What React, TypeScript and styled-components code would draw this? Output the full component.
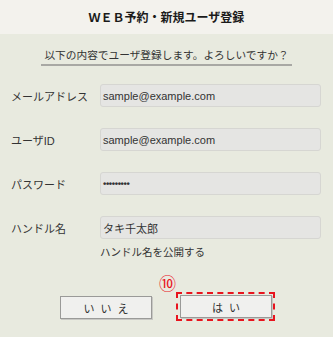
import React from "react";
import styled, { createGlobalStyle } from "styled-components";

const GlobalStyle = createGlobalStyle`
  html, body {
    margin: 0;
    padding: 0;
    background: #e8eadf;
  }
  body {
    font-family: "Liberation Sans", "Noto Sans CJK JP", sans-serif;
  }
`;

const Page = styled.div`
  width: 333px;
  height: 337px;
  background: #e8eadf;
  overflow: hidden;
`;

const Header = styled.div`
  height: 34px;
  background: #f3f2ed;
  display: flex;
  align-items: center;
  justify-content: center;
`;

const Title = styled.h1`
  margin: 0 0 2px;
  font-size: 12px;
  font-weight: bold;
  color: #1a1a1a;
`;

const Lead = styled.div`
  display: flex;
  justify-content: center;
  margin-top: 13px;
`;

const LeadText = styled.p`
  margin: 0;
  padding: 0 3px 2px;
  font-size: 10.7px;
  color: #333;
  border-bottom: 2px solid #a8a8a4;
`;

const Form = styled.div`
  display: grid;
  grid-template-columns: 89px 221px;
  row-gap: 21px;
  padding-left: 11px;
  margin-top: 18px;
  align-items: center;
`;

const Label = styled.label`
  font-size: 11px;
  color: #333;
`;

const Field = styled.div`
  height: 23px;
  box-sizing: border-box;
  background: #e5e5e3;
  border: 1px solid #d6d6d2;
  border-radius: 3px;
  display: flex;
  align-items: center;
  padding-left: 2px;
  font-size: 11px;
  color: #333;
`;

const Dots = styled.span`
  font-size: 9.5px;
  letter-spacing: -0.4px;
  font-weight: bold;
`;

const Note = styled.div`
  grid-column: 2;
  margin-top: -17px;
  font-size: 10.5px;
  color: #333;
`;

const Buttons = styled.div`
  display: flex;
  justify-content: center;
  align-items: center;
  gap: 24px;
  margin-top: 34px;
  padding-left: 2px;
`;

const Button = styled.button`
  width: 92px;
  height: 23px;
  box-sizing: border-box;
  background: #f0f0ee;
  border: 1px solid #9a9a98;
  box-shadow: 1px 1px 0 #c8c8c4;
  font-family: "Liberation Sans", "Noto Sans CJK JP", sans-serif;
  font-size: 11px;
  color: #333;
  letter-spacing: 6px;
  padding: 0 0 0 6px;
`;

const Highlight = styled.div`
  position: relative;
  padding: 1px 1px 1px 2px;
  border: 2px dashed #e8141e;
  margin-top: -2px;
`;

const Marker = styled.span`
  position: absolute;
  left: -19px;
  top: -20px;
  font-size: 17px;
  line-height: 1;
  color: #e8141e;
  font-family: "Noto Sans CJK JP", sans-serif;
`;

const rows = [
  { label: "メールアドレス", value: "sample@example.com" },
  { label: "ユーザID", value: "sample@example.com" },
  { label: "パスワード", value: "" },
  { label: "ハンドル名", value: "タキ千太郎" },
];

export default function App() {
  return (
    <Page>
      <GlobalStyle />
      <Header>
        <Title>ＷＥＢ予約・新規ユーザ登録</Title>
      </Header>
      <Lead>
        <LeadText>以下の内容でユーザ登録します。よろしいですか？</LeadText>
      </Lead>
      <Form>
        {rows.map(r => (
          <React.Fragment key={r.label}>
            <Label>{r.label}</Label>
            <Field>{r.label === "パスワード" ? <Dots>•••••••••</Dots> : r.value}</Field>
          </React.Fragment>
        ))}
        <Note>ハンドル名を公開する</Note>
      </Form>
      <Buttons>
        <Button>いいえ</Button>
        <Highlight>
          <Marker>⑩</Marker>
          <Button>はい</Button>
        </Highlight>
      </Buttons>
    </Page>
  );
}
